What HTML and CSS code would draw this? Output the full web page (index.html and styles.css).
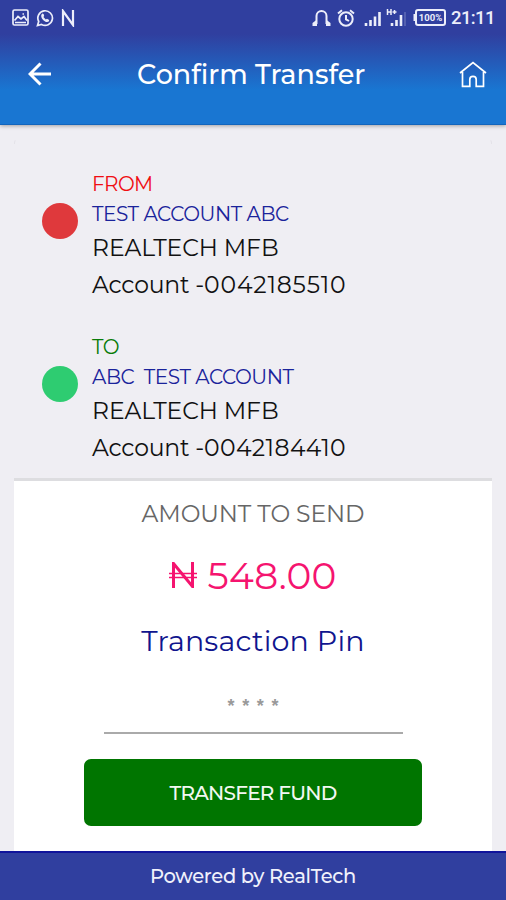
FILE: index.html
```html
<!DOCTYPE html>
<html lang="en">
<head>
<meta charset="utf-8">
<title>Confirm Transfer</title>
<link rel="stylesheet" href="styles.css">
</head>
<body>
<div class="screen">
  <header class="header">
    <div class="status">
      <div class="notices">
        <svg width="17" height="17" viewBox="0 0 17 17"><rect x="1" y="1" width="15" height="15" rx="1.5"/><path d="M2.500 11.500 6 7.500 9 10 12 7.500 15 11.500M3 13.500H14M10.500 5h1.500"/></svg>
        <svg width="18" height="18" viewBox="0 0 18 18"><path d="M1.500 16.500 2.700 12.500A7.300 7.300 0 1 1 5.500 15.400Z"/><path class="solid" d="M6.200 4.500 7.600 5l.6 2-.8 1 2.400 2.600 1.200-.8 2.200 1.100-.4 1.700c-3.600 1.800-8.400-3.400-7.500-6.700Z"/></svg>
        <svg class="n-icon" width="14" height="18" viewBox="0 0 14 18"><path d="M2 17V2L12 16V1"/></svg>
      </div>
      <div class="system">
        <svg width="19" height="18" viewBox="0 0 19 18"><path d="M4.500 15V7a5 5 0 0 1 10 0v8"/><path class="solid" d="M.5 14 5 10.500v6.500H.5ZM14 10.500l4.500 3.500V17H14Z"/></svg>
        <svg class="alarm" width="20" height="18" viewBox="0 0 20 18"><circle cx="10" cy="10" r="6.700"/><path d="M2 4.500 6 1.200M14 1.200l4 3.300M10 6v4.300l3 1.700"/></svg>
        <svg class="signal" width="42" height="19" viewBox="0 0 42 19"><path d="M2 18v-3M6.500 18v-6M11 18V8.500M15.500 18V4M28 18v-3M32.500 18v-6M37 18V7"/><path class="fine" d="M23.500 1v6M27 1v6M23.500 4h3.500M30.500 2v4M28.500 4h4"/><path class="faint" d="M41 18V4"/></svg>
        <svg class="battery" width="33" height="17" viewBox="0 0 33 17"><rect x="3" y="1" width="29" height="15" rx="2"/><path d="M1.500 5v7"/><text x="17.500" y="12.200" text-anchor="middle">100%</text></svg>
        <span class="clock">21:11</span>
      </div>
    </div>
    <nav class="bar">
      <svg class="back" width="24" height="24" viewBox="0 0 24 24"><path d="M23 12H2M12.500 1.500 2 12l10.500 10.500"/></svg>
      <h1 class="title">Confirm Transfer</h1>
      <svg class="home" width="28" height="27" viewBox="0 0 28 27"><path d="M1 12 14 1.500 27 12M3.500 11v14.300h7.300V18.500a3.200 3.200 0 0 1 6.400 0v6.800h7.300V11"/></svg>
    </nav>
  </header>
  <main class="content">
    <div class="card-top"></div>
    <section class="party">
      <span class="dot dot-from"></span>
      <div>
        <p class="label from">FROM</p>
        <p class="label holder">TEST ACCOUNT ABC</p>
        <p class="detail bank">REALTECH MFB</p>
        <p class="detail">Account -<span class="digits-from">0042185510</span></p>
      </div>
    </section>
    <section class="party">
      <span class="dot dot-to"></span>
      <div>
        <p class="label to">TO</p>
        <p class="label holder">ABC&nbsp; TEST ACCOUNT</p>
        <p class="detail bank">REALTECH MFB</p>
        <p class="detail">Account -<span class="digits-to">0042184410</span></p>
      </div>
    </section>
    <section class="payment">
      <p class="caption">AMOUNT TO SEND</p>
      <p class="amount"><svg width="28" height="26" viewBox="0 0 28 26"><path d="M4.500 26V1.500L23.500 24.500V0"/><path class="bars" d="M0 11.500h28M0 15.500h28"/></svg><span>548.00</span></p>
      <p class="pin-title">Transaction Pin</p>
      <div class="pin"><span>*</span><span>*</span><span>*</span><span>*</span></div>
      <button class="submit">TRANSFER FUND</button>
    </section>
  </main>
  <footer class="footer">Powered by RealTech</footer>
</div>
</body>
</html>
```
FILE: styles.css
```css
* { box-sizing: border-box; margin: 0; padding: 0; }
body { font-family: Montserrat, Inter, sans-serif; background: #efeef3; }
svg { display: block; flex: none; fill: none; stroke: currentColor; stroke-width: 2; }
.screen { width: 506px; height: 900px; display: flex; flex-direction: column; overflow: hidden; }
.header { height: 125px; flex: none; color: #fff; background: linear-gradient(#303f9f 0, #303f9f 34px, #1976d2 90px); border-bottom: 1px solid #1265bd; box-shadow: 0 1px 4px #0005; }
.status { height: 35px; display: flex; justify-content: space-between; padding: 0 12px 0 12px; align-items: center; color: #eceefa; }
.notices, .system { display: flex; align-items: center; }
.notices { gap: 7px; }
.notices svg { stroke-width: 1.7; }
.notices .n-icon { stroke-width: 2.200; }
.solid { fill: currentColor; stroke: none; }
.alarm { margin-left: 5px; }
.signal { margin-left: 8px; stroke-width: 2.600; }
.signal .fine { stroke-width: 1.500; }
.signal .faint { stroke-width: 1.500; opacity: .25; }
.battery { margin-left: 7px; }
.battery text { font: bold 9.500px Roboto, sans-serif; fill: currentColor; stroke: none; }
.clock { margin-left: 5px; font: 500 18.500px/20px Roboto, sans-serif; width: 43px; white-space: nowrap; letter-spacing: -.6px; }
.bar { height: 79px; display: flex; justify-content: space-between; align-items: center; padding: 0 19px 0 28px; }
.bar svg { stroke-width: 3; }
.bar .back { margin-bottom: 2px; }
.bar .home { stroke-width: 1.700; margin-bottom: 1px; }
.title { font-size: 27px; line-height: 40px; font-weight: 500; width: 237px; white-space: nowrap; }
.content { flex: 1; padding: 14px 14px 0; display: flex; flex-direction: column; }
.card-top { height: 5px; border: 1px solid #e4e3e8; border-width: 1px 1px 0; border-radius: 4px 4px 0 0; border-top-color: transparent; margin-bottom: 25px; }
.party { height: 163px; display: flex; padding-left: 28px; gap: 14px; white-space: nowrap; }
.dot { width: 36px; height: 36px; margin-top: 34px; border-radius: 50%; }
.dot-from { background: #df393c; }
.dot-to { background: #2ecc71; }
.label { font-size: 20px; line-height: 30px; letter-spacing: -.45px; }
.from { color: #f00d12; letter-spacing: -.6px; }
.to { color: #087b08; }
.holder { color: #1a239b; }
.detail { font-size: 23.500px; line-height: 37px; color: #111; letter-spacing: -.2px; }
.bank { letter-spacing: -.1px; }
.digits-from { letter-spacing: .85px; }
.digits-to { letter-spacing: .4px; }
.payment { flex: 1; margin-top: -17px; background: #fff; border-top: 3px solid #dddde0; display: flex; flex-direction: column; align-items: center; padding-top: 13px; white-space: nowrap; }
.caption { font-size: 23.500px; line-height: 40px; color: #666; letter-spacing: -.1px; }
.amount { height: 60px; margin-top: 11px; display: flex; align-items: center; gap: 10px; color: #f5146f; font-size: 37.500px; letter-spacing: .2px; }
.amount svg { stroke-width: 3; }
.amount .bars { stroke-width: 1.700; }
.pin-title { font-size: 28.500px; line-height: 40px; margin-top: 16px; color: #10158e; letter-spacing: .2px; }
.pin { width: 299px; height: 43px; margin: 30px 0 25px; border-bottom: 2px solid #aaa; display: flex; justify-content: center; gap: 5px; font: bold 18px/31px "Liberation Sans", sans-serif; color: #999; }
.pin span { width: 9.700px; text-align: center; }
.submit { width: 338px; height: 67px; border: 0; border-radius: 7px; background: #007500; color: #f2f8f2; font: 500 20px Montserrat, Inter, sans-serif; letter-spacing: -.75px; }
.footer { height: 49px; flex: none; border-top: 2px solid #10149b; background: #303f9f; color: #f0f1fb; text-align: center; font-size: 19.500px; font-weight: 500; line-height: 47px; letter-spacing: -.32px; }
```
